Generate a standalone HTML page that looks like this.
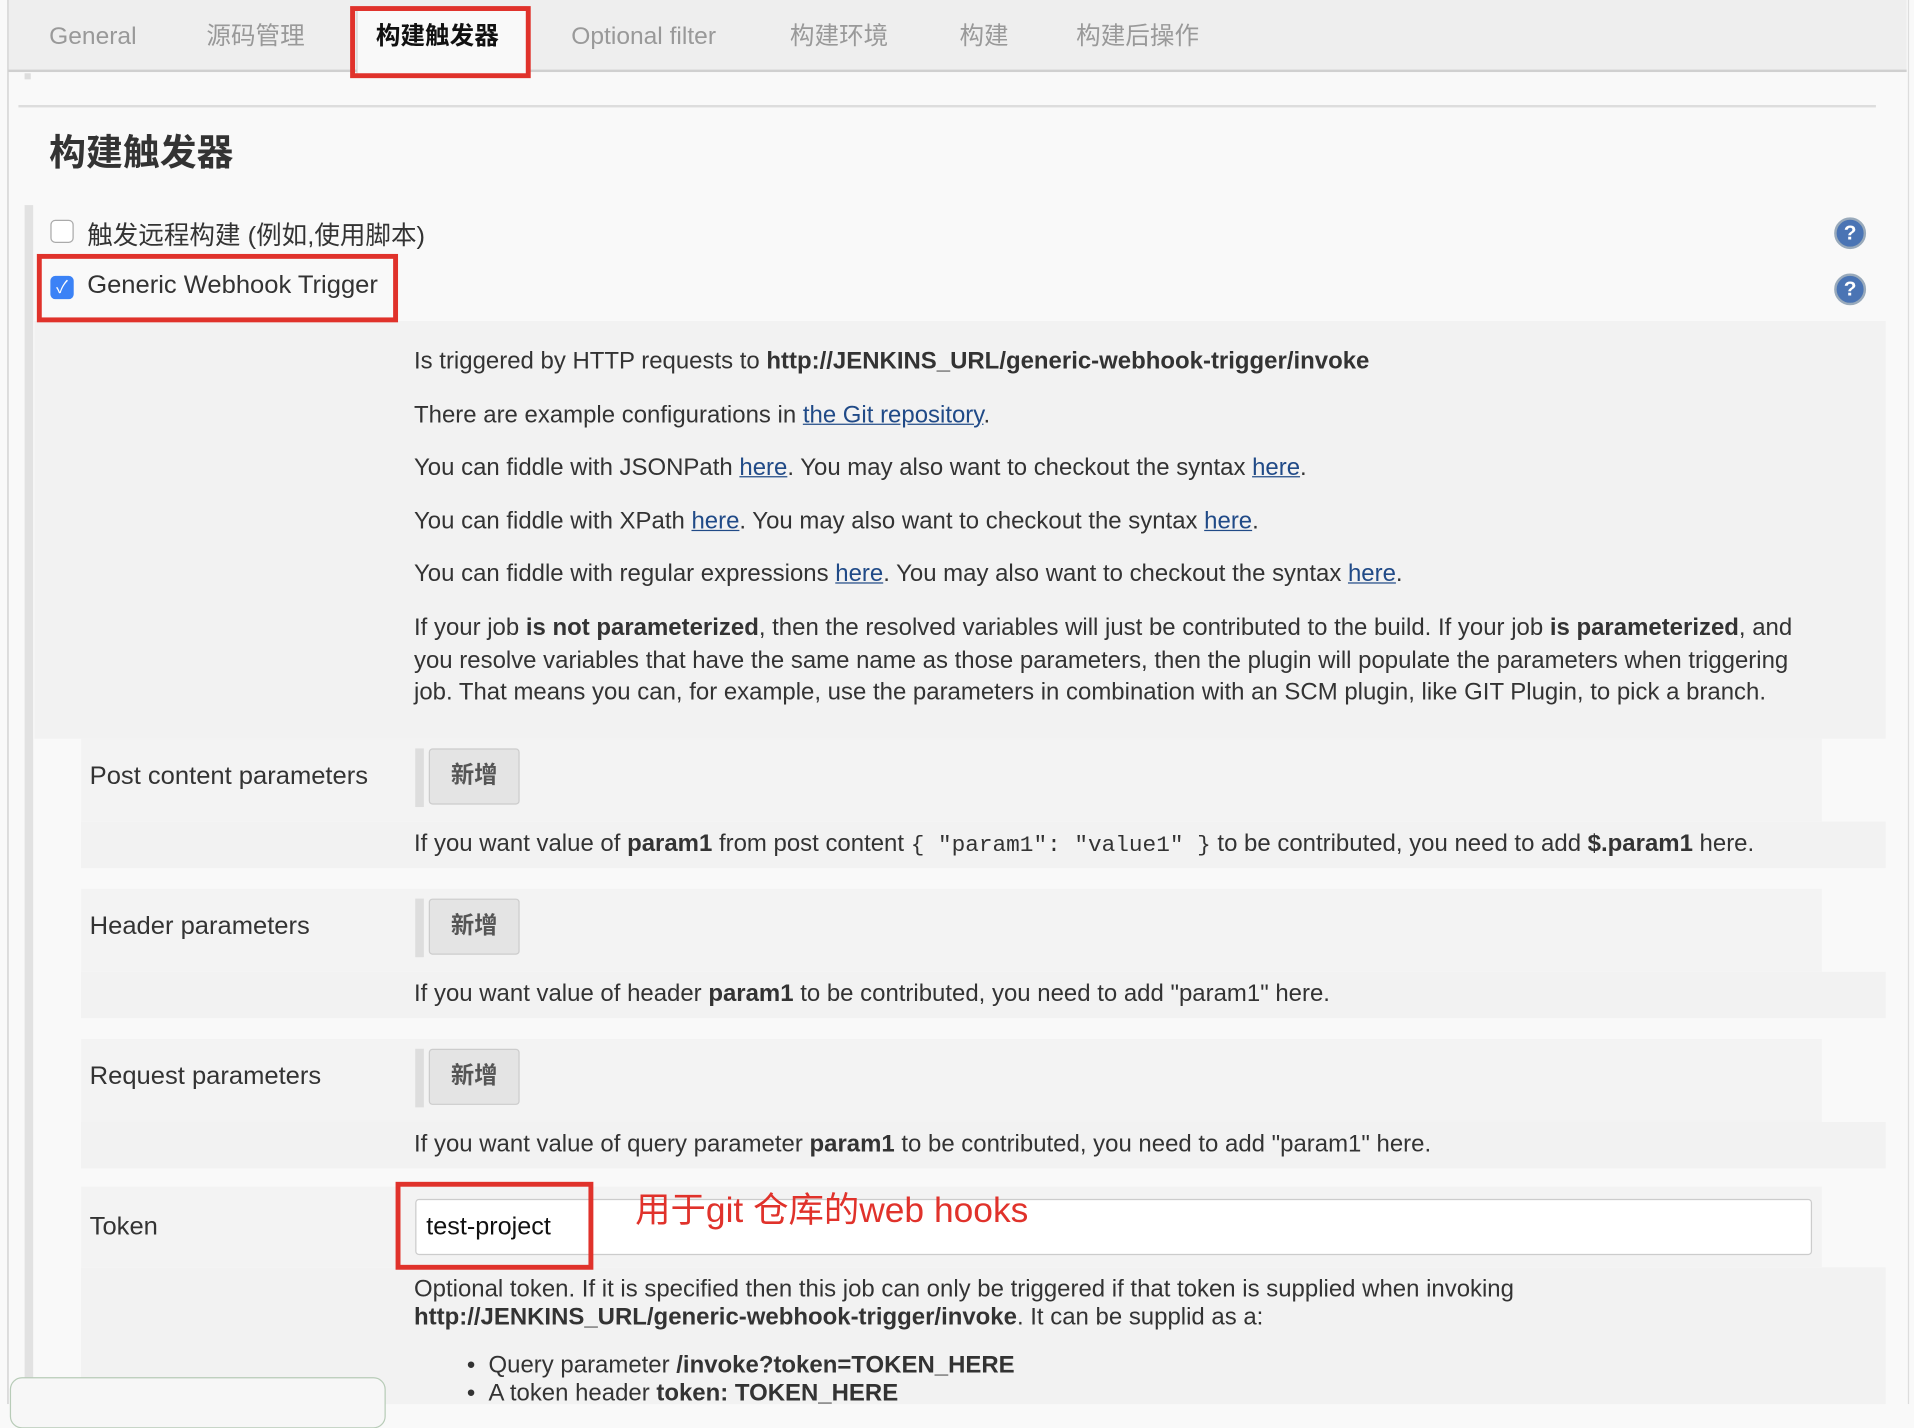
<!DOCTYPE html>
<html><head><meta charset="utf-8"><style>
html,body{margin:0;padding:0;width:1914px;height:1404px;overflow:hidden;background:#f9f9f9}
#w{position:absolute;left:0;top:0;width:1558px;height:1150px;transform:scale(1.2285,1.2209);transform-origin:0 0;font-family:"Liberation Sans","Noto Sans CJK SC",sans-serif;color:#333;background:#f9f9f9}
.a{position:absolute;white-space:nowrap}
.t{font-size:20px;color:#999;top:12px;line-height:36px;height:36px}
.d{font-size:19.5px;left:337px}
a{color:#204a87;text-decoration:underline}
.btn{position:absolute;left:349px;width:74px;height:46px;background:#e4e4e4;border:1px solid #ccc;border-radius:3px;box-sizing:border-box;font-size:19px;font-weight:bold;color:#555;text-align:center;line-height:44px}
.bar{position:absolute;left:338px;width:7px;height:48px;background:#ddd}
.lbl{font-size:20.8px;left:73px}
.help{position:absolute;left:1493px;width:26px;height:26px;border-radius:50%;background:#4a74b4;border:2px solid #9ab;box-sizing:border-box;color:#fff;font-weight:bold;font-size:17px;text-align:center;line-height:22px}
.red{position:absolute;border:4px solid #e0322b;box-sizing:border-box}
</style></head><body><div id="w">
<div class="a" style="left:6px;top:0;width:1546px;height:1150px;border-left:1px solid #ccc;border-right:1px solid #ddd"></div>
<div class="a" style="left:7px;top:0;width:1545px;height:57px;background:#eeeeee;border-bottom:2px solid #d0d0d0"></div>
<div class="a" style="left:290px;top:5px;width:140px;height:55px;background:#f9f9f9;border:1px solid #ccc;border-bottom:none;border-radius:4px 4px 0 0"></div>
<div class="a t" style="left:40px">General</div>
<div class="a t" style="left:168px">源码管理</div>
<div class="a t" style="left:306px;color:#111;font-weight:bold">构建触发器</div>
<div class="a t" style="left:465px">Optional filter</div>
<div class="a t" style="left:643px">构建环境</div>
<div class="a t" style="left:781px">构建</div>
<div class="a t" style="left:876px">构建后操作</div>
<div class="red" style="left:285px;top:5px;width:147px;height:59px"></div>
<div class="a" style="left:20px;top:60px;width:5px;height:5px;background:#ddd"></div>
<div class="a" style="left:15px;top:86px;width:1512px;height:2px;background:#ddd"></div>
<div class="a" style="left:40px;top:100px;font-size:30px;font-weight:bold;color:#333">构建触发器</div>
<div class="a" style="left:20px;top:168px;width:7px;height:982px;background:#e2e2e2"></div>
<div class="a" style="left:28px;top:263px;width:1507px;height:342px;background:#f2f2f2"></div>
<div class="a" style="left:41px;top:180px;width:19px;height:19px;border:1px solid #aaa;border-radius:4px;background:#fff;box-sizing:border-box"></div>
<div class="a" style="left:71px;top:176px;font-size:20.8px">触发远程构建 (例如,使用脚本)</div>
<div class="a" style="left:41px;top:226px;width:19px;height:19px;border-radius:4px;background:#3b82f6;color:#fff;font-size:14px;text-align:center;line-height:19px">✓</div>
<div class="a" style="left:71px;top:222px;font-size:20.8px">Generic Webhook Trigger</div>
<div class="red" style="left:30px;top:208px;width:294px;height:56px"></div>
<div class="help" style="top:178px">?</div>
<div class="help" style="top:224px">?</div>
<div class="a d" style="top:285px">Is triggered by HTTP requests to <b>http://JENKINS_URL/generic-webhook-trigger/invoke</b></div>
<div class="a d" style="top:329px">There are example configurations in <a>the Git repository</a>.</div>
<div class="a d" style="top:372px">You can fiddle with JSONPath <a>here</a>. You may also want to checkout the syntax <a>here</a>.</div>
<div class="a d" style="top:416px">You can fiddle with XPath <a>here</a>. You may also want to checkout the syntax <a>here</a>.</div>
<div class="a d" style="top:459px">You can fiddle with regular expressions <a>here</a>. You may also want to checkout the syntax <a>here</a>.</div>
<div class="a d" style="top:501px;line-height:26.5px">If your job <b>is not parameterized</b>, then the resolved variables will just be contributed to the build. If your job <b>is parameterized</b>, and<br>you resolve variables that have the same name as those parameters, then the plugin will populate the parameters when triggering<br>job. That means you can, for example, use the parameters in combination with an SCM plugin, like GIT Plugin, to pick a branch.</div>

<div class="a" style="left:66px;top:605px;width:1417px;height:68px;background:#f3f3f3"></div>
<div class="a" style="left:66px;top:673px;width:1469px;height:38px;background:#f2f2f2"></div>
<div class="a lbl" style="top:624px">Post content parameters</div>
<div class="bar" style="top:613px"></div><div class="btn" style="top:613px">新增</div>
<div class="a d" style="top:680px">If you want value of <b>param1</b> from post content <span style="font-family:'Liberation Mono',monospace;font-size:18.5px">{ "param1": "value1" }</span> to be contributed, you need to add <b>$.param1</b> here.</div>

<div class="a" style="left:66px;top:728px;width:1417px;height:68px;background:#f3f3f3"></div>
<div class="a" style="left:66px;top:796px;width:1469px;height:38px;background:#f2f2f2"></div>
<div class="a lbl" style="top:747px">Header parameters</div>
<div class="bar" style="top:736px"></div><div class="btn" style="top:736px">新增</div>
<div class="a d" style="top:803px">If you want value of header <b>param1</b> to be contributed, you need to add "param1" here.</div>

<div class="a" style="left:66px;top:851px;width:1417px;height:68px;background:#f3f3f3"></div>
<div class="a" style="left:66px;top:919px;width:1469px;height:38px;background:#f2f2f2"></div>
<div class="a lbl" style="top:870px">Request parameters</div>
<div class="bar" style="top:859px"></div><div class="btn" style="top:859px">新增</div>
<div class="a d" style="top:926px">If you want value of query parameter <b>param1</b> to be contributed, you need to add "param1" here.</div>

<div class="a" style="left:66px;top:972px;width:1417px;height:66px;background:#f3f3f3"></div>
<div class="a" style="left:66px;top:1038px;width:1469px;height:112px;background:#f2f2f2"></div>
<div class="a lbl" style="top:993px">Token</div>
<div class="a" style="left:338px;top:982px;width:1137px;height:46px;background:#fff;border:1px solid #ccc;border-radius:3px;box-sizing:border-box"></div>
<div class="a" style="left:347px;top:993px;font-size:20.5px;color:#111">test-project</div>
<div class="red" style="left:322px;top:968px;width:161px;height:72px"></div>
<div class="a" style="left:517px;top:969px;font-size:28.8px;color:#e0322b">用于git 仓库的web hooks</div>
<div class="a d" style="top:1045px;line-height:23px">Optional token. If it is specified then this job can only be triggered if that token is supplied when invoking<br><b>http://JENKINS_URL/generic-webhook-trigger/invoke</b>. It can be supplid as a:</div>
<div class="a d" style="top:1107px;left:380px;line-height:23px">•&nbsp;&nbsp;Query parameter <b>/invoke?token=TOKEN_HERE</b><br>•&nbsp;&nbsp;A token header <b>token: TOKEN_HERE</b></div>
<div class="a" style="left:8px;top:1128px;width:304px;height:40px;background:#f7f7f7;border:1px solid #b8ccb8;border-radius:10px"></div>
</div></body></html>
